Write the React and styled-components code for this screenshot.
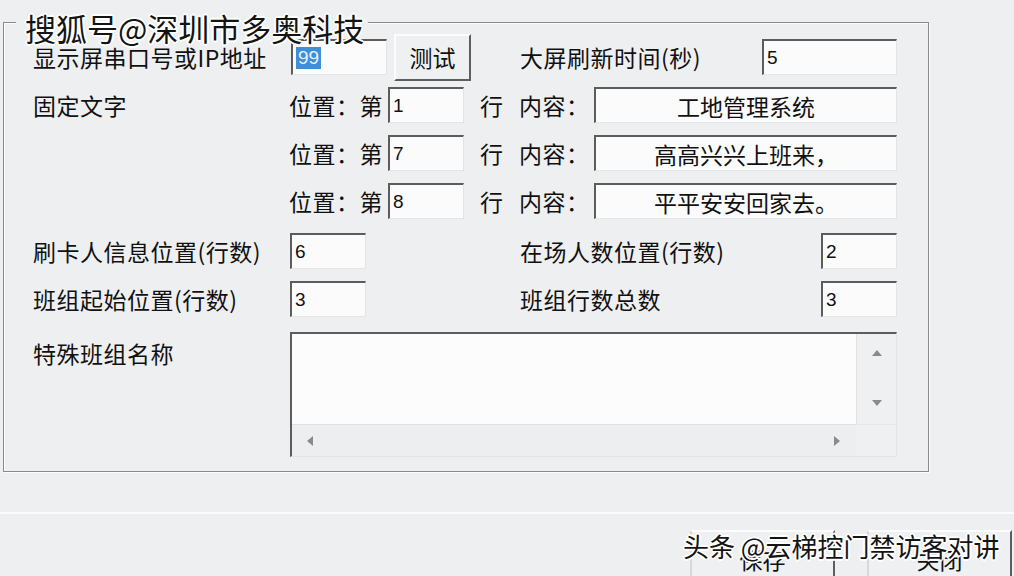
import React from "react";
import styled, { createGlobalStyle } from "styled-components";

const Global = createGlobalStyle`
  html, body { margin: 0; padding: 0; }
  body {
    background: #eeeff0;
    font-family: "Noto Sans CJK SC", "Noto Sans", sans-serif;
    color: #111;
    overflow: hidden;
  }
`;

const Page = styled.div`
  position: relative;
  width: 1014px;
  height: 576px;
  box-sizing: border-box;
  padding: 22px 0 0 3px;
  background: #eeeff0;
  overflow: hidden;
`;

const Group = styled.div`
  position: relative;
  width: 926px;
  height: 450px;
  box-sizing: border-box;
  border: 1px solid #8a8a8a;
  box-shadow: 1px 1px 0 #fdfdfd, inset 1px 1px 0 #fdfdfd;
  padding: 10px 31px 0 29px;
`;

const TitleGap = styled.div`
  position: absolute;
  top: -3px;
  left: 12px;
  width: 352px;
  height: 6px;
  background: #eeeff0;
`;

const Row = styled.div`
  display: grid;
  grid-template-columns: 257px 229px 1fr;
  height: 48px;
  align-items: center;
  margin-top: ${(p) => p.$gap || 0}px;
`;

const Cell = styled.div`
  display: flex;
  align-items: center;
`;

const Label = styled.span`
  font-size: 23px;
  line-height: 1;
  white-space: nowrap;
  letter-spacing: 0.5px;
  color: #111;
  margin-left: ${(p) => p.$ml || 0}px;
`;

const Field = styled.div`
  box-sizing: border-box;
  width: ${(p) => p.$w}px;
  height: 36px;
  margin-left: ${(p) => (p.$right ? "auto" : `${p.$ml || 0}px`)};
  background: #fbfbfb;
  border-top: 2px solid #5c5c5c;
  border-left: 2px solid #5c5c5c;
  border-right: 1px solid #e4e4e4;
  border-bottom: 1px solid #e4e4e4;
  display: flex;
  align-items: center;
  justify-content: ${(p) => (p.$center ? "center" : "flex-start")};
  padding-left: ${(p) => (p.$center ? 0 : 3)}px;
  font-family: ${(p) =>
    p.$center ? `"Noto Sans CJK SC", sans-serif` : `"Liberation Sans", Arial, sans-serif`};
  font-size: ${(p) => (p.$center ? 23 : 19)}px;
  color: #111;
  white-space: nowrap;
`;

const Selected = styled.span`
  background: #3f8fd8;
  color: #e6f2ff;
  padding: 1px 2px;
  line-height: 20px;
`;

const RaisedButton = styled.div`
  box-sizing: border-box;
  width: ${(p) => p.$w}px;
  height: ${(p) => p.$h}px;
  margin-left: ${(p) => p.$ml || 0}px;
  background: #eff0f1;
  border-top: 2px solid #fdfdfd;
  border-left: 2px solid #fdfdfd;
  border-right: 2px solid #5e5e5e;
  border-bottom: 2px solid #5e5e5e;
  display: flex;
  align-items: center;
  justify-content: center;
  font-size: 23px;
  color: #111;
`;

const FooterButton = styled(RaisedButton)`
  align-items: flex-start;
  padding-top: 10px;
  border-left-color: #d8d8d8;
`;

const MemoRow = styled.div`
  display: grid;
  grid-template-columns: 257px 1fr;
  margin-top: 9px;
`;

const MemoLabel = styled(Label)`
  padding-top: 10px;
`;

const Memo = styled.div`
  box-sizing: border-box;
  height: 125px;
  border-top: 2px solid #5c5c5c;
  border-left: 2px solid #5c5c5c;
  border-right: 1px solid #e4e4e4;
  border-bottom: 1px solid #e4e4e4;
  display: grid;
  grid-template-columns: 1fr 40px;
  grid-template-rows: 1fr 32px;
  background: #fcfcfc;
`;

const MemoText = styled.div`
  background: #fcfcfc;
`;

const VScroll = styled.div`
  background: #eff0f1;
  border-left: 1px solid #e2e2e2;
  display: flex;
  flex-direction: column;
  align-items: center;
  justify-content: space-between;
  padding: 14px 0 14px;
`;

const HScroll = styled.div`
  background: #eceeef;
  border-top: 1px solid #e0e0e0;
  display: flex;
  align-items: center;
  justify-content: space-between;
  padding: 0 12px 0 13px;
`;

const Corner = styled.div`
  background: #eff0f1;
  border-top: 1px solid #e6e6e6;
`;

const Footer = styled.div`
  margin-top: 40px;
  margin-left: -3px;
  border-top: 2px solid #fbfbfb;
  height: 80px;
  display: flex;
  justify-content: flex-end;
  padding-top: 16px;
  gap: 32px;
  padding-right: 2px;
`;

const Watermark = styled.div`
  position: absolute;
  left: ${(p) => p.$x}px;
  top: ${(p) => p.$y}px;
  font-size: ${(p) => p.$size}px;
  line-height: 1;
  color: #141414;
  white-space: nowrap;
  text-shadow:
    1px 1px 0 #fff, -1px -1px 0 #fff, 1px -1px 0 #fff, -1px 1px 0 #fff,
    2px 0 0 #fff, -2px 0 0 #fff, 0 2px 0 #fff, 0 -2px 0 #fff;
`;

const Arrow = ({ dir }) => {
  const pts = {
    up: "1,8 6,2 11,8",
    down: "1,2 6,8 11,2",
    left: "8,1 2,6 8,11",
    right: "2,1 8,6 2,11",
  }[dir];
  return (
    <svg width="12" height="12" viewBox="0 0 12 12">
      <polygon points={pts} fill="#8a8a8a" />
    </svg>
  );
};

const TextLineRow = ({ line, text, label }) => (
  <Row>
    <Cell>{label && <Label>{label}</Label>}</Cell>
    <Cell>
      <Label $ml={-1}>位置：第</Label>
      <Field $w={76} $ml={5}>{line}</Field>
      <Label $ml={16}>行</Label>
    </Cell>
    <Cell>
      <Label>内容：</Label>
      <Field $w={303} $right $center>{text}</Field>
    </Cell>
  </Row>
);

export default function App() {
  return (
    <>
      <Global />
      <Page>
        <Group>
          <TitleGap />
          <Row>
            <Cell>
              <Label>显示屏串口号或IP地址</Label>
            </Cell>
            <Cell>
              <Field $w={96} $ml={1}>
                <Selected>99</Selected>
              </Field>
              <RaisedButton $w={77} $h={47} $ml={7}>测试</RaisedButton>
            </Cell>
            <Cell>
              <Label $ml={1}>大屏刷新时间(秒)</Label>
              <Field $w={135} $right>5</Field>
            </Cell>
          </Row>
          <TextLineRow label="固定文字" line="1" text="工地管理系统" />
          <TextLineRow line="7" text="高高兴兴上班来，" />
          <TextLineRow line="8" text="平平安安回家去。" />
          <Row $gap={2}>
            <Cell>
              <Label>刷卡人信息位置(行数)</Label>
            </Cell>
            <Cell>
              <Field $w={76}>6</Field>
            </Cell>
            <Cell>
              <Label $ml={1}>在场人数位置(行数)</Label>
              <Field $w={76} $right>2</Field>
            </Cell>
          </Row>
          <Row>
            <Cell>
              <Label>班组起始位置(行数)</Label>
            </Cell>
            <Cell>
              <Field $w={76}>3</Field>
            </Cell>
            <Cell>
              <Label $ml={1}>班组行数总数</Label>
              <Field $w={76} $right>3</Field>
            </Cell>
          </Row>
          <MemoRow>
            <MemoLabel>特殊班组名称</MemoLabel>
            <Memo>
              <MemoText />
              <VScroll>
                <Arrow dir="up" />
                <Arrow dir="down" />
              </VScroll>
              <HScroll>
                <Arrow dir="left" />
                <Arrow dir="right" />
              </HScroll>
              <Corner />
            </Memo>
          </MemoRow>
        </Group>
        <Footer>
          <FooterButton $w={145} $h={56}>保存</FooterButton>
          <FooterButton $w={145} $h={56}>关闭</FooterButton>
        </Footer>
        <Watermark $x={25} $y={12} $size={31}>搜狐号@深圳市多奥科技</Watermark>
        <Watermark $x={683} $y={533} $size={26}>头条 @云梯控门禁访客对讲</Watermark>
      </Page>
    </>
  );
}
